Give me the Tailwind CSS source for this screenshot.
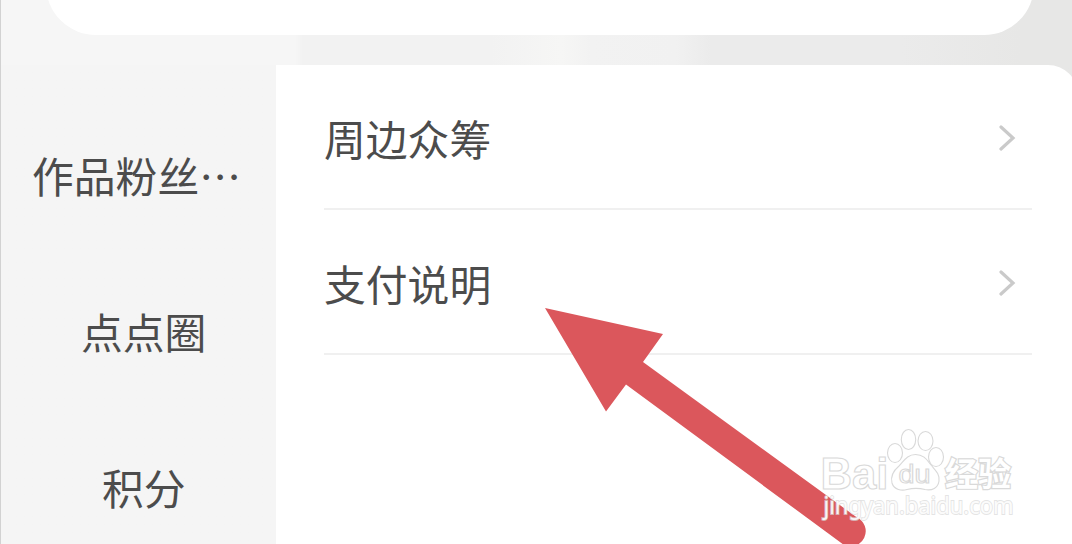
<!DOCTYPE html>
<html lang="zh-CN">
<head>
    <meta charset="UTF-8">
    <meta name="viewport" content="width=device-width, initial-scale=1.0">
    <title>支付说明</title>
    <script src="https://cdn.jsdelivr.net/npm/@tailwindcss/browser@4"></script>
</head>
<body class="bg-[#f5f5f5] font-['Noto_Sans_CJK_SC',sans-serif] text-[#4c4c4c]">
    <div class="relative flex flex-col w-[1072px] h-[544px] overflow-hidden border-l border-[#d2d2d2]">
        <!-- Header card -->
        <header class="h-[65px] shrink-0 bg-[linear-gradient(90deg,#f6f6f6_294px,#f2f2f2_302px,#f2f2f2_490px,#f6f6f5_560px,#f2f2f2_590px,#f1f1f1_675px,#ebebeb_710px,#ebebeb_900px,#e7e7e6_1020px)]">
            <div class="-mt-20 h-[115px] ml-[45px] mr-[38px] rounded-b-[50px] bg-white"></div>
        </header>

        <div class="flex flex-1 bg-linear-to-r from-[#f5f5f5] from-90% to-[#e7e7e6] to-91%">
            <!-- Sidebar -->
            <nav class="w-[275px] shrink-0 flex flex-col text-[41.8px] leading-[60px]">
                <div class="mt-[80px] pl-[31px] whitespace-nowrap">作品粉丝…</div>
                <div class="mt-[96px] pl-[80px]">点点圈</div>
                <div class="mt-[96px] pl-[101px]">积分</div>
            </nav>

            <!-- Content -->
            <main class="w-[802px] shrink-0 bg-white rounded-tr-[30px] pl-12 pr-[46px] text-[41.8px]">
                <div class="flex items-center justify-between h-[145px] border-b-2 border-[#f0f0f0] pr-4">
                    <span class="leading-[60px] pt-0.5">周边众筹</span>
                    <svg class="w-[18px] h-[28px]" viewBox="0 0 18 28" fill="none" stroke="#cacaca" stroke-width="3.2">
                        <path stroke-linecap="round" d="M3 4L15 15L3 26"></path>
                    </svg>
                </div>
                <div class="flex items-center justify-between h-[145px] border-b-2 border-[#f0f0f0] pr-4">
                    <span class="leading-[60px] pt-0.5">支付说明</span>
                    <svg class="w-[18px] h-[28px]" viewBox="0 0 18 28" fill="none" stroke="#cacaca" stroke-width="3.2">
                        <path stroke-linecap="round" d="M3 4L15 15L3 26"></path>
                    </svg>
                </div>
            </main>
        </div>

        <!-- Arrow -->
        <svg class="absolute top-0 -left-px w-[1072px] h-[544px]" viewBox="0 0 1072 544">
            <path fill="#db575c" d="M545 308L663 334L643 362L857 517.500A15 15 0 0 1 844 545L626 384.500L606 411.500Z"></path>
        </svg>

        <!-- Watermark -->
        <svg class="absolute top-[420px] left-[809px] w-[220px] h-[110px]" viewBox="810 420 220 110">
            <g fill="#fff" stroke="#d9d9d9" stroke-width="1.1">
                <text x="820.5" y="488.5" font-family="Liberation Sans, sans-serif" font-weight="700" font-size="44" textLength="68" lengthAdjust="spacingAndGlyphs">Bai</text>
                <ellipse cx="895" cy="453" rx="7.5" ry="9.5"></ellipse>
                <ellipse cx="908.5" cy="439.5" rx="7.2" ry="10"></ellipse>
                <ellipse cx="925.5" cy="441" rx="7.5" ry="9.5"></ellipse>
                <ellipse cx="936" cy="457" rx="7.5" ry="9.5"></ellipse>
                <path d="M915.5 454.5C907 454.5 904 461 899 466C893 471 890.5 477 892 483C894 490 902 491 907 489.5C913 488 919 488 925 489.5C932 491 938 488 939 481C940 474 935 470 931 465C927 460 924 454.5 915.5 454.5Z"></path>
                <text x="898.5" y="483" font-family="Liberation Sans, sans-serif" font-size="25" textLength="32" lengthAdjust="spacingAndGlyphs">du</text>
                <text x="945" y="486" font-family="Noto Sans CJK SC, sans-serif" font-weight="700" font-size="33" stroke-width="2.4" paint-order="stroke" textLength="66" lengthAdjust="spacingAndGlyphs">经验</text>
            </g>
            <text x="823.5" y="514" font-family="Noto Sans, sans-serif" font-size="23" fill="#fff" fill-opacity="0.9" stroke="#d8d8d8" stroke-opacity="0.7" stroke-width="1.8" paint-order="stroke" textLength="190" lengthAdjust="spacingAndGlyphs">jingyan.baidu.com</text>
        </svg>
    </div>
</body>
</html>
